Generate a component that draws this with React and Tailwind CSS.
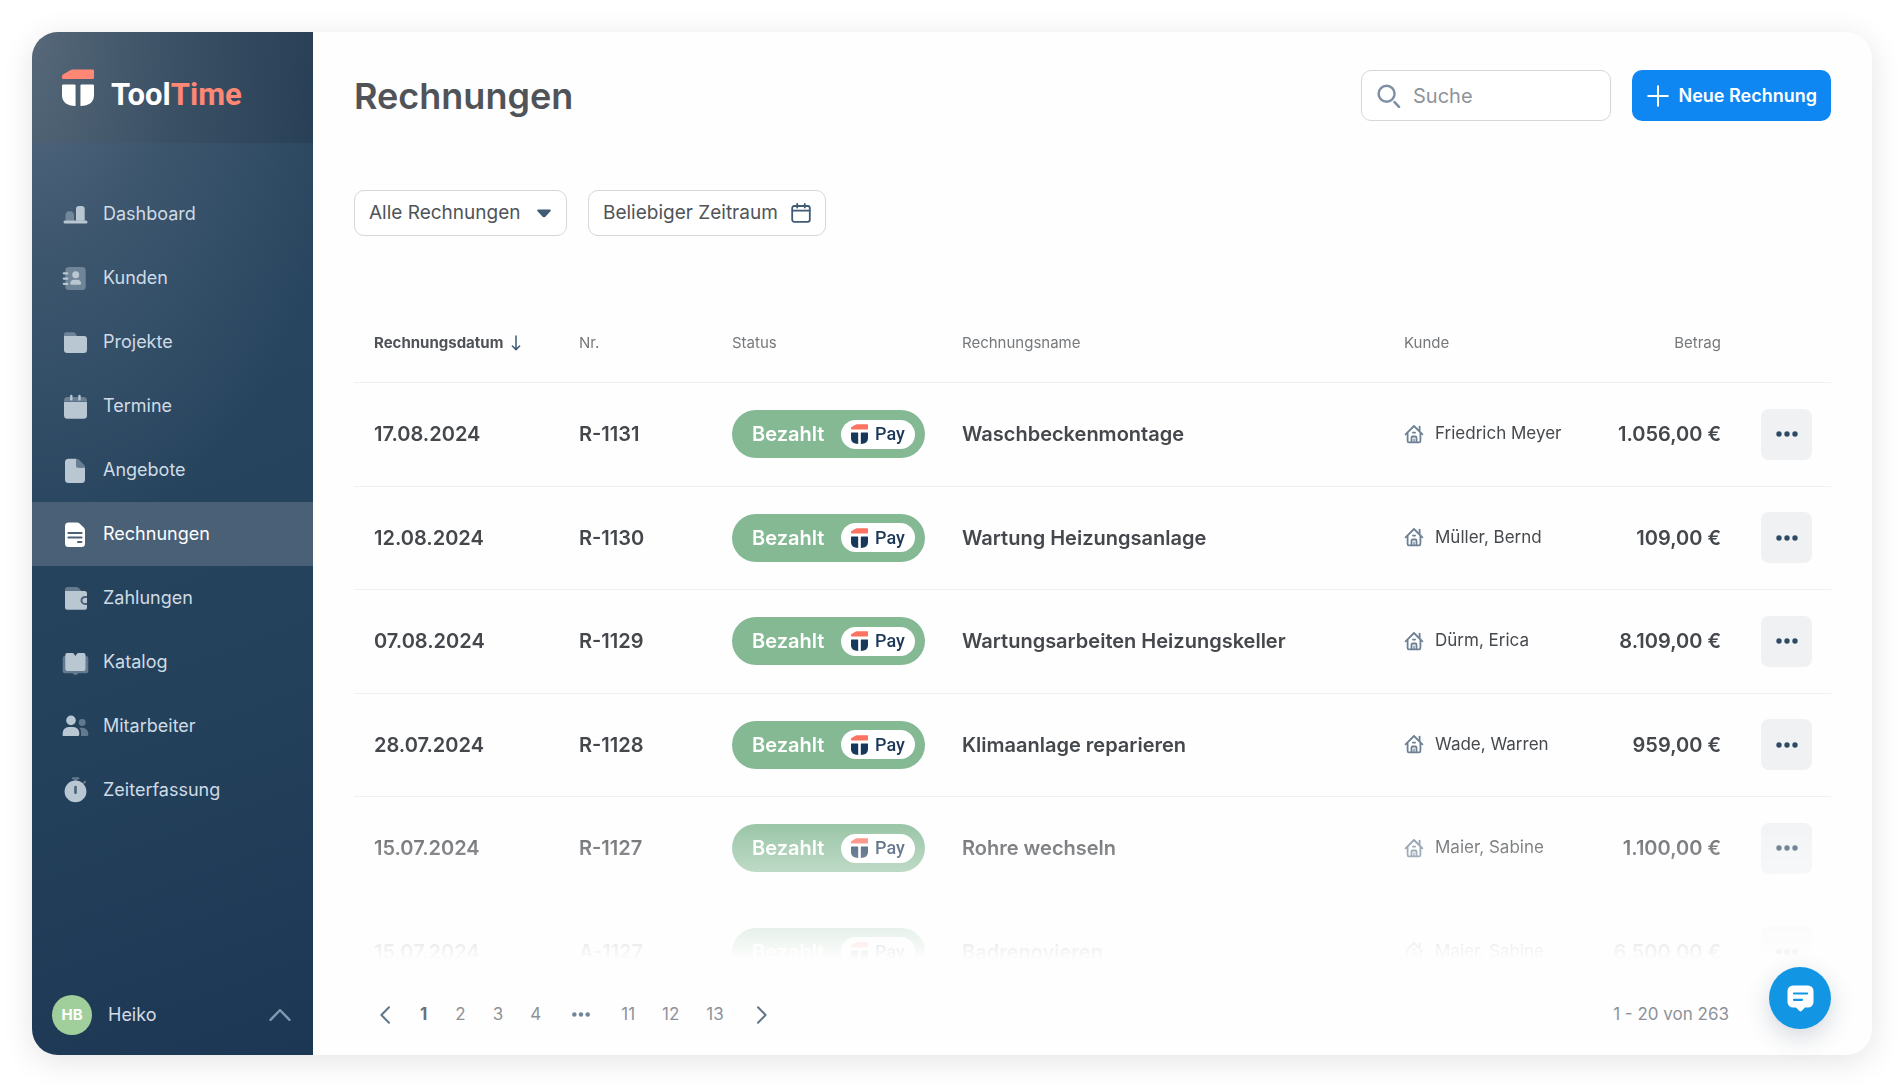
import React from "react";

const BRAND = "#ff8775";

function BrandMark({ className, top = BRAND, body = "#ffffff" }) {
  return (
    <svg viewBox="0 0 26 37" className={className} preserveAspectRatio="none" aria-hidden="true">
      <path d="M9 0.5 H25 Q26 0.5 26 1.5 V9 Q26 10 25 10 H1 Q0 10 0 9 V7.2 Q0 6.2 0.8 5.6 L6.8 1.2 Q7.8 0.5 9 0.5 Z" fill={top} />
      <path d="M1 15.5 H10 Q11 15.5 11 16.5 V37 C4 37 0 33 0 26 V16.5 Q0 15.5 1 15.5 Z" fill={body} />
      <path d="M16 15.5 H25 Q26 15.5 26 16.5 V26 C26 33 22 37 15 37 V16.5 Q15 15.5 16 15.5 Z" fill={body} />
    </svg>
  );
}

const dim = { opacity: 0.42 };
const cut = "#4c6078";

const navIcons = {
  dashboard: (
    <>
      <path style={dim} d="M4.5 20.7 V15 a3.5 3.5 0 0 1 3.5 -3.7 h1.5 a3.5 3.5 0 0 1 3.5 3.7 V20.7 Z" />
      <path d="M15 20.7 V9 a3 3 0 0 1 3 -3 h2.7 a3 3 0 0 1 3 3 V20.7 Z" />
      <rect x="2.5" y="20.5" width="24" height="3" rx="1.5" />
    </>
  ),
  kunden: (
    <>
      <rect style={dim} x="4.3" y="3" width="20.4" height="23" rx="3.5" />
      <circle cx="14.7" cy="10.7" r="3.5" />
      <path d="M9.3 19.2 a3.7 3.7 0 0 1 3.7 -3.5 h3.3 a3.7 3.7 0 0 1 3.7 3.5 a1.4 1.4 0 0 1 -1.4 1.5 h-7.9 a1.4 1.4 0 0 1 -1.4 -1.5 Z" />
      <path d="M2.8 9.3 H6.3 M2.8 14.6 H6.3 M2.8 19.8 H6.3" stroke="currentColor" strokeWidth="2.3" strokeLinecap="round" />
    </>
  ),
  projekte: (
    <>
      <path style={dim} d="M3 8 V6.3 a2 2 0 0 1 2 -2 h7.6 a2 2 0 0 1 1.8 1 L16 8 Z" />
      <path d="M3 8 H23 a3 3 0 0 1 3 3 V21.8 a3.2 3.2 0 0 1 -3.2 3.2 H6.2 A3.2 3.2 0 0 1 3 21.8 Z" />
    </>
  ),
  termine: (
    <>
      <path style={dim} d="M3 9.8 V8.5 a3.5 3.5 0 0 1 3.5 -3.5 H22.5 a3.5 3.5 0 0 1 3.5 3.5 V9.8 Z" />
      <path d="M3 10 H26 V23.2 a3.5 3.5 0 0 1 -3.5 3.5 H6.5 A3.5 3.5 0 0 1 3 23.2 Z" />
      <path d="M10.3 4 V7.4 M18.5 4 V7.4" stroke="currentColor" strokeWidth="2.4" strokeLinecap="round" />
    </>
  ),
  angebote: (
    <>
      <path d="M7.5 2.7 H15 V9.2 a2.5 2.5 0 0 0 2.5 2.5 H24 V23.5 A3.5 3.5 0 0 1 20.5 27 H7.5 A3.5 3.5 0 0 1 4 23.5 V6.2 A3.5 3.5 0 0 1 7.5 2.7 Z" />
      <path style={dim} d="M15 2.7 h0.8 a3 3 0 0 1 2 0.8 L23 8.7 a3 3 0 0 1 1 2 V11.7 H17.5 A2.5 2.5 0 0 1 15 9.2 Z" />
    </>
  ),
  rechnungen: (
    <>
      <path d="M7.5 2.5 H16 a4 4 0 0 1 2.8 1.2 L22.8 7.6 A4 4 0 0 1 24 10.4 V23.5 A3.5 3.5 0 0 1 20.5 27 H7.5 A3.5 3.5 0 0 1 4 23.5 V6 A3.5 3.5 0 0 1 7.5 2.5 Z" />
      <path d="M7.4 13 H20.6 M7.4 17.5 H20.6 M17 22 H20.4" stroke={cut} strokeWidth="2" strokeLinecap="round" />
    </>
  ),
  zahlungen: (
    <>
      <path style={dim} d="M4 7.5 V5.8 A2.8 2.8 0 0 1 6.8 3 H15 a4 4 0 0 1 3 1.2 L21 7.5 Z" />
      <path d="M4 7 H23.5 A2.5 2.5 0 0 1 26 9.5 V23.2 a2.5 2.5 0 0 1 -2.5 2.5 H6.5 A2.5 2.5 0 0 1 4 23.2 Z" />
      <path d="M26 12.9 H24 a3.5 3.5 0 0 0 0 7 H26" fill="none" stroke={cut} strokeWidth="2" />
    </>
  ),
  katalog: (
    <>
      <path style={dim} d="M4 8 H25 a2.3 2.3 0 0 1 2.3 2.3 V23 a2.3 2.3 0 0 1 -2.3 2.3 H17.2 a3.2 3.2 0 0 1 -5.6 0 H4 A2.3 2.3 0 0 1 1.7 23 V10.3 A2.3 2.3 0 0 1 4 8 Z" />
      <path d="M6.3 5 H11.5 a1.5 1.5 0 0 1 1.2 0.6 L14.4 8 L16.1 5.6 A1.5 1.5 0 0 1 17.3 5 H22.5 a2 2 0 0 1 2 2 V21 a2 2 0 0 1 -2 2 H6.3 a2 2 0 0 1 -2 -2 V7 a2 2 0 0 1 2 -2 Z" />
    </>
  ),
  mitarbeiter: (
    <>
      <circle cx="10" cy="8.4" r="4.8" />
      <path d="M1.7 24 V21 a6 6 0 0 1 6 -6 h4.6 a6 6 0 0 1 6 6 V22.5 a1.5 1.5 0 0 1 -1.5 1.5 Z" />
      <circle style={dim} cx="21.2" cy="10.5" r="3.4" />
      <path style={dim} d="M18.2 15.8 H21.5 a5.8 5.8 0 0 1 5.8 5.8 V22.5 a1.5 1.5 0 0 1 -1.5 1.5 H20 V20.4 a6 6 0 0 0 -1.8 -4.6 Z" />
    </>
  ),
  zeiterfassung: (
    <>
      <path style={dim} d="M12 2.3 H17.3 M14.6 2.6 V5 M23 6.8 L24 5.8" stroke="currentColor" strokeWidth="2.2" strokeLinecap="round" />
      <circle cx="14.5" cy="15.4" r="10.9" />
      <path d="M14.5 11 V16.8" stroke={cut} strokeWidth="2.6" strokeLinecap="round" />
    </>
  ),
};

const navItems = [
  ["dashboard", "Dashboard"],
  ["kunden", "Kunden"],
  ["projekte", "Projekte"],
  ["termine", "Termine"],
  ["angebote", "Angebote"],
  ["rechnungen", "Rechnungen"],
  ["zahlungen", "Zahlungen"],
  ["katalog", "Katalog"],
  ["mitarbeiter", "Mitarbeiter"],
  ["zeiterfassung", "Zeiterfassung"],
];

const invoices = [
  ["17.08.2024", "R-1131", "Waschbeckenmontage", "Friedrich Meyer", "1.056,00 €"],
  ["12.08.2024", "R-1130", "Wartung Heizungsanlage", "Müller, Bernd", "109,00 €"],
  ["07.08.2024", "R-1129", "Wartungsarbeiten Heizungskeller", "Dürm, Erica", "8.109,00 €"],
  ["28.07.2024", "R-1128", "Klimaanlage reparieren", "Wade, Warren", "959,00 €"],
  ["15.07.2024", "R-1127", "Rohre wechseln", "Maier, Sabine", "1.100,00 €"],
  ["15.07.2024", "A-1127", "Badrenovieren", "Maier, Sabine", "6.500,00 €"],
];

function Sidebar() {
  return (
    <aside className="flex w-[281px] shrink-0 flex-col rounded-l-[26px] bg-[radial-gradient(ellipse_320px_520px_at_0px_0px,#566b82_0%,#48607799_45%,transparent_100%),linear-gradient(160deg,#2b475f_0%,#28455f_35%,#24415c_65%,#1c3753_100%)]">
      <div className="flex h-[111px] items-end gap-[17px] rounded-tl-[26px] bg-linear-to-r from-[#57636a59] to-[#23354a73] pb-[37px] pl-[30px]">
        <BrandMark className="h-[37px] w-8" />
        <span className="font-[Roboto] text-[31px] leading-[23px] font-bold text-white">
          Tool<span className="text-[#ff8775]">Time</span>
        </span>
      </div>
      <nav className="mt-[39px]">
        <ul>
          {navItems.map(([key, label]) => (
            <li key={key}>
              <a
                href="#"
                aria-current={key === "rechnungen" ? "page" : undefined}
                className="flex h-16 items-center gap-[14px] pl-[29px] text-lg text-[#cfdbe5] aria-[current]:bg-[#4a6077] aria-[current]:text-white"
              >
                <svg viewBox="0 0 28 28" className={key === "rechnungen" ? "size-7 text-white" : "size-7 text-[#b9c7d3]"} fill="currentColor" aria-hidden="true">
                  {navIcons[key]}
                </svg>
                {label}
              </a>
            </li>
          ))}
        </ul>
      </nav>
      <button type="button" className="mt-auto mb-5 flex h-10 items-center pr-[22px] pl-5 text-lg text-[#d3dde6]">
        <span className="mr-4 flex size-10 items-center justify-center rounded-full bg-[#a1cf9c] text-[15px] font-bold text-white">HB</span>
        Heiko
        <svg viewBox="0 0 22 12" className="ml-auto h-3 w-[22px]" fill="none" stroke="#7f99b3" strokeWidth="2.4" strokeLinecap="round" aria-hidden="true">
          <path d="M1.5 10.8 L11 1.2 L20.5 10.8" />
        </svg>
      </button>
    </aside>
  );
}

function StatusPill() {
  return (
    <span className="inline-flex h-12 w-[193px] items-center justify-between rounded-full bg-[#85b994] pr-[10px] pl-5 text-xl font-semibold text-white">
      Bezahlt
      <span className="flex h-[29px] w-[74px] items-center justify-center gap-[7px] rounded-full bg-white font-[Roboto] text-lg leading-none font-medium text-[#1c3857]">
        <BrandMark className="h-5 w-[17px]" top="#fb7361" body="#17385b" />
        Pay
      </span>
    </span>
  );
}

function HouseIcon() {
  return (
    <svg viewBox="0 0 20 20" className="size-5 shrink-0" fill="none" stroke="#6d8094" strokeWidth="1.8" strokeLinecap="round" strokeLinejoin="round" aria-hidden="true">
      <path d="M1.6 10.4 L10 2 L18.4 10.4" />
      <path d="M15.6 2.6 V6.4" />
      <path d="M3.6 9.4 V17 a1.4 1.4 0 0 0 1.4 1.4 H15 a1.4 1.4 0 0 0 1.4 -1.4 V9.4" />
      <path d="M7.5 18 V13.8 a1.3 1.3 0 0 1 1.3 -1.3 h2.4 a1.3 1.3 0 0 1 1.3 1.3 V18" />
      <path d="M8.9 8.6 H11.1" />
      <path d="M10 15.2 V18" strokeWidth="1.2" />
    </svg>
  );
}

function Dots({ className }) {
  return (
    <svg viewBox="0 0 22 6" className={className} fill="currentColor" aria-hidden="true">
      <circle cx="3" cy="3" r="2.7" />
      <circle cx="11" cy="3" r="2.7" />
      <circle cx="19" cy="3" r="2.7" />
    </svg>
  );
}

function InvoiceTable() {
  return (
    <table className="w-full table-fixed border-collapse text-left">
      <colgroup>
        <col className="w-[225px]" />
        <col className="w-[153px]" />
        <col className="w-[230px]" />
        <col />
        <col className="w-[190px]" />
        <col className="w-[127px]" />
        <col className="w-[110px]" />
      </colgroup>
      <thead>
        <tr className="h-[78px] border-b border-[#eff0f1] text-[15px] text-[#76797c] [&>th]:font-normal">
          <th scope="col" className="pl-5" aria-sort="descending">
            <span className="flex items-center gap-2 font-bold text-[#4f5357]">
              Rechnungsdatum
              <svg viewBox="0 0 10 16" className="h-4 w-[10px]" fill="none" stroke="#3f5a76" strokeWidth="1.5" strokeLinecap="round" strokeLinejoin="round" aria-hidden="true">
                <path d="M5 1 V14.5 M1.4 11 L5 14.6 L8.6 11" />
              </svg>
            </span>
          </th>
          <th scope="col">Nr.</th>
          <th scope="col">Status</th>
          <th scope="col">Rechnungsname</th>
          <th scope="col">Kunde</th>
          <th scope="col" className="text-right">Betrag</th>
          <th scope="col" aria-label="Aktionen" />
        </tr>
      </thead>
      <tbody>
        {invoices.map(([date, nr, name, customer, amount], i) => (
          <tr
            key={nr}
            className={
              "whitespace-nowrap text-xl font-semibold text-[#44474b] odd:h-[104px] even:h-[103px] " +
              (i < 4 ? "border-b border-[#eff0f1]" : "")
            }
          >
            <td className="pl-5">{date}</td>
            <td>{nr}</td>
            <td><StatusPill /></td>
            <td>{name}</td>
            <td>
              <span className="flex items-center gap-[11px] text-[17px] font-normal text-[#45494d]">
                <HouseIcon />
                {customer}
              </span>
            </td>
            <td className="text-right">{amount}</td>
            <td className="pr-[19px]">
              <button type="button" aria-label={"Aktionen für " + nr} className="ml-auto flex size-[51px] items-center justify-center rounded-lg bg-[#eff1f3] text-[#2f4a66]">
                <Dots className="h-[6px] w-[22px]" />
              </button>
            </td>
          </tr>
        ))}
      </tbody>
    </table>
  );
}

function Pagination() {
  return (
    <footer className="flex h-[95px] shrink-0 items-center justify-between pt-[14px] pr-[102px] pl-[26px] text-[17px] text-[#8d9299]">
      <nav aria-label="Seiten" className="flex items-center">
        <button type="button" aria-label="Vorherige Seite" className="mr-[30px]">
          <svg viewBox="0 0 10 18" className="h-[18px] w-[10px]" fill="none" stroke="#5f7689" strokeWidth="2" strokeLinecap="round" strokeLinejoin="round" aria-hidden="true">
            <path d="M9 1.2 L1.4 9 L9 16.8" />
          </svg>
        </button>
        <button type="button" aria-current="page" className="mr-[28px] font-bold text-[#6b7078]">1</button>
        <button type="button" className="mr-[27px]">2</button>
        <button type="button" className="mr-[27px]">3</button>
        <button type="button" className="mr-[30px]">4</button>
        <Dots className="mr-[30px] h-[5px] w-5 text-[#71859a]" />
        <button type="button" className="mr-[27px]">11</button>
        <button type="button" className="mr-[27px]">12</button>
        <button type="button" className="mr-[33px]">13</button>
        <button type="button" aria-label="Nächste Seite">
          <svg viewBox="0 0 10 18" className="h-[18px] w-[10px]" fill="none" stroke="#5f7689" strokeWidth="2" strokeLinecap="round" strokeLinejoin="round" aria-hidden="true">
            <path d="M1 1.2 L8.6 9 L1 16.8" />
          </svg>
        </button>
      </nav>
      <p>1 - 20 von 263</p>
    </footer>
  );
}

export default function App() {
  return (
    <div className="h-screen bg-white p-8 font-[Inter,sans-serif]">
      <div className="relative flex h-full rounded-[26px] bg-[#fefefe] shadow-[0_6px_32px_rgba(0,0,0,0.11)]">
        <Sidebar />
        <main className="flex min-w-0 flex-1 flex-col pr-[41px] pl-[41px]">
          <header className="mt-[38px] flex h-[51px] shrink-0 items-center gap-[21px]">
            <h1 className="mr-auto text-4xl font-semibold text-[#505459]">Rechnungen</h1>
            <label className="flex h-full w-[250px] items-center gap-3 rounded-[10px] border border-[#d3d8db] bg-white px-[15px]">
              <svg viewBox="0 0 24 24" className="size-6 shrink-0" fill="none" stroke="#7d8fa5" strokeWidth="2.4" strokeLinecap="round" aria-hidden="true">
                <circle cx="9.6" cy="9.8" r="8" />
                <path d="M17.6 18.2 L22 22.8" strokeWidth="2.6" />
              </svg>
              <input type="search" placeholder="Suche" aria-label="Suche" className="w-full min-w-0 bg-transparent text-xl outline-none placeholder:text-[#8f9399]" />
            </label>
            <button type="button" className="flex h-full w-[199px] items-center justify-between rounded-[10px] bg-[#0e87f3] pr-[14px] pl-[15px] text-lg font-semibold whitespace-nowrap text-white">
              <svg viewBox="0 0 22 22" className="size-[22px] shrink-0" fill="none" stroke="currentColor" strokeWidth="2" strokeLinecap="round" aria-hidden="true">
                <path d="M11 1.2 V20.8 M1.2 11 H20.8" />
              </svg>
              Neue Rechnung
            </button>
          </header>

          <div className="mt-[69px] flex h-[46px] shrink-0 gap-[21px] text-[19px] text-[#505459]">
            <div className="grid w-[213px] items-center">
              <select aria-label="Rechnungsfilter" className="col-start-1 row-start-1 h-full w-full appearance-none rounded-[10px] border border-[#d3d8db] bg-white pl-[14px]">
                <option>Alle Rechnungen</option>
              </select>
              <svg viewBox="0 0 14 9" className="pointer-events-none col-start-1 row-start-1 mr-4 h-[9px] w-[14px] justify-self-end" fill="#3f5b75" aria-hidden="true">
                <path d="M1.2 0.5 H12.8 Q14.4 0.8 13.4 2.2 L8.4 7.7 Q7 9 5.6 7.7 L0.6 2.2 Q-0.4 0.8 1.2 0.5 Z" />
              </svg>
            </div>
            <button type="button" className="flex w-[238px] items-center justify-between rounded-[10px] border border-[#d3d8db] bg-white pr-[14px] pl-[14px] whitespace-nowrap">
              Beliebiger Zeitraum
              <svg viewBox="0 0 20 20" className="size-5" fill="none" stroke="#3f5b75" strokeWidth="1.8" strokeLinecap="round" strokeLinejoin="round" aria-hidden="true">
                <rect x="1.2" y="3" width="17.6" height="15.8" rx="2" />
                <path d="M1.5 7.6 H18.5 M6.2 1 V4.6 M13.8 1 V4.6" />
              </svg>
            </button>
          </div>

          <div className="mt-[68px] min-h-0 flex-1 overflow-hidden [mask-image:linear-gradient(to_bottom,black_calc(100%-165px),transparent)]">
            <InvoiceTable />
          </div>

          <Pagination />
        </main>

        <button type="button" aria-label="Chat öffnen" className="absolute right-[41px] bottom-[26px] flex size-[62px] items-center justify-center rounded-full bg-[#1296e4] shadow-[0_8px_24px_rgba(40,60,90,0.2)]">
          <svg viewBox="0 0 27 27" className="size-[27px]" aria-hidden="true">
            <path d="M6 0.5 H21 A5.5 5.5 0 0 1 26.5 6 V17 A5.5 5.5 0 0 1 21 22.5 H18 L14.6 26.1 Q13.5 27 12.4 26.1 L9 22.5 H6 A5.5 5.5 0 0 1 0.5 17 V6 A5.5 5.5 0 0 1 6 0.5 Z" fill="#fff" />
            <path d="M7 8.5 H20.2 M7 14.8 H15" stroke="#1296e4" strokeWidth="2.2" strokeLinecap="round" />
          </svg>
        </button>
      </div>
    </div>
  );
}
